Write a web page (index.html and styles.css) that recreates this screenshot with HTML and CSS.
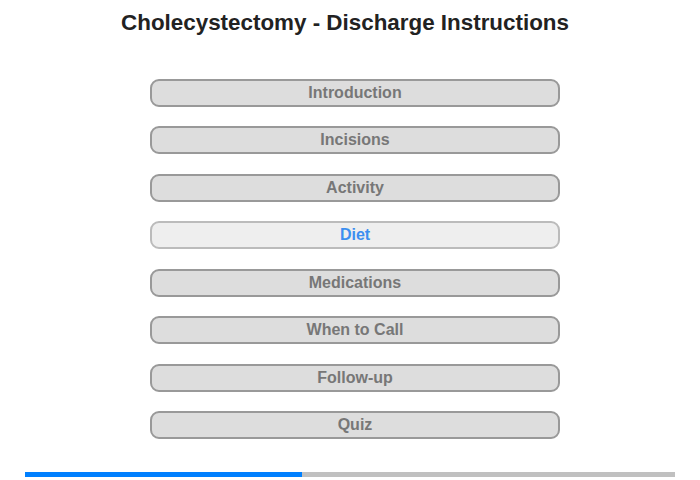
FILE: index.html
```html
<!DOCTYPE html>
<html>
<head>
<meta charset="utf-8">
<link rel="stylesheet" href="styles.css">
</head>
<body>
<div class="page">
  <h1 class="title">Cholecystectomy - Discharge Instructions</h1>
  <nav class="menu">
    <div class="btn">Introduction</div>
    <div class="btn">Incisions</div>
    <div class="btn">Activity</div>
    <div class="btn active">Diet</div>
    <div class="btn">Medications</div>
    <div class="btn">When to Call</div>
    <div class="btn">Follow-up</div>
    <div class="btn">Quiz</div>
  </nav>
  <div class="progress"><div class="progress-fill" style="width:42.6%"></div></div>
</div>
</body>
</html>
```
FILE: styles.css
```css
html, body {
  margin: 0;
  padding: 0;
  background: #fff;
}
.page {
  width: 700px;
  height: 480px;
  font-family: "Liberation Sans", Arial, sans-serif;
  display: flex;
  flex-direction: column;
}
.title {
  margin: 0;
  padding: 10px 10px 0 0;
  height: 26px;
  text-align: center;
  font-size: 22.4px;
  font-weight: bold;
  color: #222;
  line-height: 26px;
}
.menu {
  margin-top: 43px;
  padding-left: 10px;
  display: flex;
  flex-direction: column;
  align-items: center;
  gap: 19.43px;
}
.btn {
  box-sizing: border-box;
  width: 410px;
  height: 28px;
  border: 2px solid #999;
  border-radius: 9px;
  background: #ddd;
  color: #777;
  font-size: 16px;
  font-weight: bold;
  text-align: center;
  line-height: 24px;
}
.btn.active {
  background: #eee;
  border-color: #bbb;
  color: #3c8ff0;
}
.progress {
  margin: 33px 25px 0 25px;
  height: 5px;
  background: #c0c0c0;
}
.progress-fill {
  height: 100%;
  background: #0080ff;
}
```
